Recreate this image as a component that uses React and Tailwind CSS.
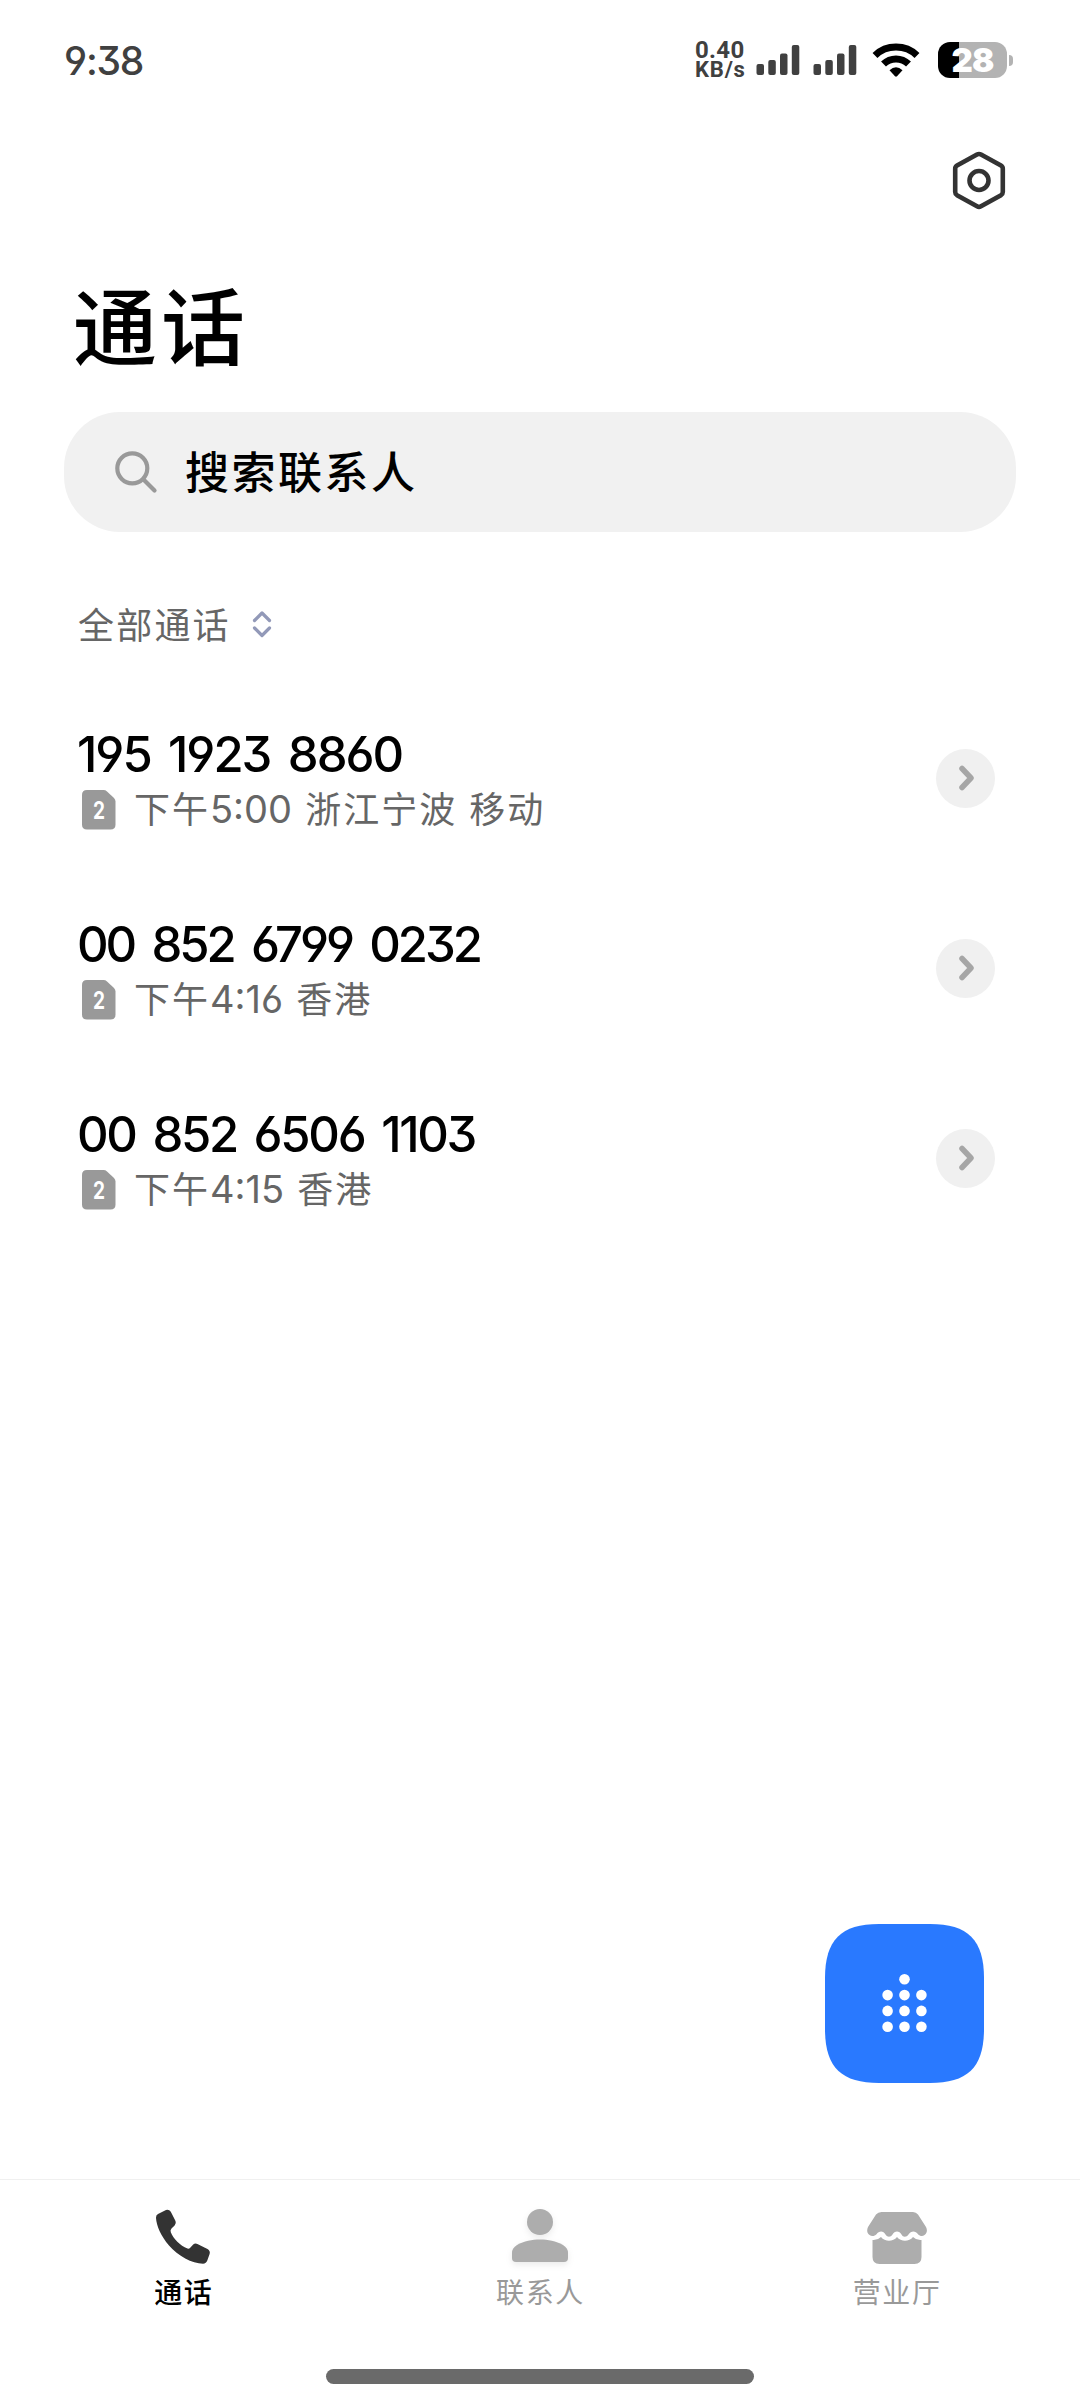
import clsx from 'clsx';

const calls = [
    { number: '195 1923 8860', spacing: 'tracking-[-2px] [word-spacing:6.3px]', time: '5:00', place: '浙江宁波 移动' },
    { number: '00 852 6799 0232', spacing: 'tracking-[-3.1px] [word-spacing:7.5px]', time: '4:16', place: '香港' },
    { number: '00 852 6506 1103', spacing: 'tracking-[-2.3px] [word-spacing:6px]', time: '4:15', place: '香港' },
];

const digits = "font-['Inter','Noto_Sans_CJK_SC',sans-serif] [font-feature-settings:'cv03','cv04','cv09']";

const Signal = () => (
    <svg width="44" height="30" viewBox="0 0 44 30" fill="#404040">
        <rect x="0.5" y="19" width="7.5" height="11" rx="2" />
        <rect x="12.3" y="15" width="7.5" height="15" rx="2" />
        <rect x="24" y="8.5" width="7.5" height="21.5" rx="2" />
        <rect x="35.8" y="0" width="7.5" height="30" rx="2" />
    </svg>
);

const Wifi = () => (
    <svg width="48" height="36" viewBox="0 0 48 36">
        <g fill="none" stroke="#000" strokeWidth="7">
            <path d="M3 13.5C14.5 2.3 33.5 2.3 45 13.5" />
            <path d="M11.5 22C18.5 15.2 29.5 15.2 36.5 22" />
        </g>
        <path d="M17.5 28.2Q24 22.5 30.5 28.2L25 34.3Q24 35.2 23 34.3Z" fill="#000" />
    </svg>
);

const Battery = () => (
    <div className="flex items-center">
        <div className="flex h-9 w-[69px] items-center justify-center rounded-[12px] bg-linear-to-r from-black from-[31%] to-[#b3b3b3] to-[31%]">
            <span className="font-['Inter',sans-serif] text-[33px] leading-none font-black tracking-[-0.8px] text-white">28</span>
        </div>
        <div className="ml-[2px] h-[11px] w-[4px] rounded-r-full bg-[#b3b3b3]" />
    </div>
);

const StatusBar = () => (
    <div className="flex h-[120px] justify-between pr-[67px] pl-[64px]">
        <span className={clsx(digits, 'mt-[37px] text-[39px] leading-[48px] font-medium tracking-[-1.2px] text-[#404040]')}>9:38</span>
        <div className="mt-[41px] flex h-[38px] items-center">
            <div className="w-[61px] font-['Roboto',sans-serif] font-bold text-[#404040]">
                <div className="text-[24px] leading-[20px] tracking-[0.3px]">0.40</div>
                <div className="text-[22px] leading-[20px] tracking-[0.8px]">KB/s</div>
            </div>
            <Signal />
            <span className="w-[13px]" />
            <Signal />
            <span className="w-[15px]" />
            <Wifi />
            <span className="w-[18px]" />
            <Battery />
        </div>
    </div>
);

const SimBadge = () => (
    <svg width="34" height="40" viewBox="0 0 34 40">
        <path d="M5 0H21.5Q23.5 0 25 1.4L32 8Q33.5 9.5 33.5 11.5V34.5Q33.5 39.5 28.5 39.5H5Q0 39.5 0 34.5V5Q0 0 5 0Z" fill="#999" />
        <text x="17" y="29" textAnchor="middle" className="font-['Inter',sans-serif] text-[24px] font-bold" fill="#fff" textLength="12" lengthAdjust="spacingAndGlyphs">2</text>
    </svg>
);

const CallRow = ({ number, spacing, time, place }) => (
    <div className="flex h-[190px] items-center justify-between pr-[85px] pl-[77px]">
        <div>
            <div className={clsx(digits, 'pt-[3px] text-[49px] leading-[60px] font-medium whitespace-nowrap text-black', spacing)}>{number}</div>
            <div className="flex h-[50px] items-center pl-[5px]">
                <SimBadge />
                <div className={clsx(digits, 'ml-[18px] text-[36px] leading-[51px] tracking-[2px] whitespace-nowrap text-[#666]')}>
                    下午<span className="text-[38px] tracking-[0px] [word-spacing:2.5px]">{time} </span>{place}
                </div>
            </div>
        </div>
        <div className="flex size-[59px] items-center justify-center rounded-full bg-[#f0f0f0]">
            <svg width="16" height="26" viewBox="0 0 16 26" fill="none" stroke="#a6a6a6" strokeWidth="5.5" strokeLinecap="round" strokeLinejoin="round">
                <path d="M4 3.5L13 13L4 22.5" />
            </svg>
        </div>
    </div>
);

const PhoneIcon = () => (
    <svg width="56" height="56" viewBox="0 0 56 56" fill="#333">
        <path d="M3 5L11 1Q14 0 15.8 2.8L20.5 12Q21.6 14.5 19.6 16.5L16.5 19.5Q15 21 15.8 23.2C18.5 30 25 36.5 32.5 39.5Q34 40 35.2 38.8L38.2 35.6Q40 33.8 42.4 34.9L52.5 40Q55.6 41.8 54.6 45L52.3 51.5Q51.2 54.6 48 54.8C37 54.5 23 47 14 36.5C6 27 1.5 17 1 9Q.8 6.2 3 5Z" />
    </svg>
);

const PersonIcon = () => (
    <svg width="58" height="56" viewBox="0 0 58 56" fill="#adadad" className="drop-shadow-[0_3px_3px_rgba(0,0,0,0.08)]">
        <circle cx="29" cy="13" r="13" />
        <path d="M1 44Q1 39 6 36C13 32 21 30.5 29 30.5S45 32 52 36Q57 39 57 44V49Q57 53 53 53H5Q1 53 1 49Z" />
    </svg>
);

const StoreIcon = () => (
    <svg width="60" height="56" viewBox="0 0 60 56" fill="#adadad">
        <path d="M14.5 3H46Q49 3 51 5.5L59 18Q60.5 21 59.5 23.5C58 27.5 53.5 28 51 25.2C48.5 21.5 44 21.5 41.5 25.5C39.5 28.5 36 28.5 34.5 25.5C32.5 21.5 27.5 21.5 25.5 25.5C23.5 28.5 20.5 28.5 18.5 25.5C16.5 21.5 12 21.5 9.5 25.2C7 28 2 27.5 .5 23.5Q-.3 21 1 18L9 5.5Q11 3 14.5 3Z" />
        <path d="M5.5 31Q10.5 31.5 14 28C18 33 26 33 30 28C34 33 42 33 46 28Q49.5 31.5 54.5 31V48Q54.5 55 47.5 55H12.5Q5.5 55 5.5 48Z" />
    </svg>
);

const tabs = [
    { label: '通话', Icon: PhoneIcon, active: true },
    { label: '联系人', Icon: PersonIcon },
    { label: '营业厅', Icon: StoreIcon },
];

const dots = [[2, 1], [1, 2], [2, 2], [3, 2], [1, 3], [2, 3], [3, 3], [1, 4], [2, 4], [3, 4]];

export default function App() {
    return (
        <div className="flex h-[2400px] w-[1080px] flex-col overflow-hidden bg-white font-['Noto_Sans_CJK_SC',sans-serif]">
            <StatusBar />
            <header className="flex h-[120px] items-center justify-end pr-[73px]">
                <svg width="56" height="60" viewBox="0 0 56 60" fill="none" stroke="#333" strokeWidth="4.6" strokeLinejoin="round">
                    <path d="M26 4.5Q28 3.4 30 4.5L50 15.5Q51.8 16.5 51.8 18.7V42Q51.8 44 50 45.2L30 56.3Q28 57.4 26 56.3L6 45.2Q4.2 44 4.2 42V18.7Q4.2 16.5 6 15.5Z" />
                    <circle cx="28" cy="30.5" r="9.5" />
                </svg>
            </header>
            <h1 className="h-[172px] pt-[23px] pl-[73px] text-[84px] leading-[120px] font-medium tracking-[4px] text-black">通话</h1>
            <div className="mx-[64px] flex h-[120px] shrink-0 items-center rounded-[56px] bg-[#f1f1f1] pl-[50px]">
                <svg width="44" height="44" viewBox="0 0 44 44" fill="none" stroke="#999" strokeWidth="4.2" strokeLinecap="round">
                    <circle cx="18.3" cy="18.3" r="15" />
                    <path d="M29.5 29.5L40.5 40.5" />
                </svg>
                <span className="-mt-[4px] ml-[27px] text-[44px] leading-none font-medium tracking-[2.5px] text-black">搜索联系人</span>
            </div>
            <div className="flex h-[151px] items-center pt-[32px] pl-[78px]">
                <span className="-mt-[2px] text-[36px] leading-none tracking-[2.2px] text-[#666]">全部通话</span>
                <svg className="ml-[20px]" width="22" height="28" viewBox="0 0 22 28" fill="none" stroke="#9299b8" strokeWidth="3.2" strokeLinecap="round" strokeLinejoin="round">
                    <path d="M3.5 10.5L11 3L18.5 10.5M3.5 18L11 25.5L18.5 18" />
                </svg>
            </div>
            <main className="flex flex-1 flex-col">
                {calls.map((call) => <CallRow key={call.number} {...call} />)}
                <button className="mt-auto mr-[96px] mb-[96px] self-end">
                    <svg className="block" width="159" height="159" viewBox="0 0 159 159">
                        <path d="M54 0H105C143 0 159 16 159 54V105C159 143 143 159 105 159H54C16 159 0 143 0 105V54C0 16 16 0 54 0Z" fill="#2979ff" />
                        {dots.map(([col, row]) => (
                            <circle key={`${col}-${row}`} cx={45.7 + col * 16.9} cy={39.5 + row * 15.8} r="5.3" fill="#fff" />
                        ))}
                    </svg>
                </button>
            </main>
            <nav className="flex h-[190px] shrink-0 border-t border-[#f0f0f0] px-[5px] pt-[29px]">
                {tabs.map(({ label, Icon, active }) => (
                    <div key={label} className="flex flex-1 flex-col items-center">
                        <Icon />
                        <span className={clsx('mt-[6px] pl-[1px] text-[28px] leading-[40px] tracking-[1.6px]', active ? 'font-medium text-black' : 'text-[#999]')}>{label}</span>
                    </div>
                ))}
            </nav>
            <div className="mx-auto mb-[16px] h-[15px] w-[428px] shrink-0 rounded-full bg-[#6a6a6a]" />
        </div>
    );
}
